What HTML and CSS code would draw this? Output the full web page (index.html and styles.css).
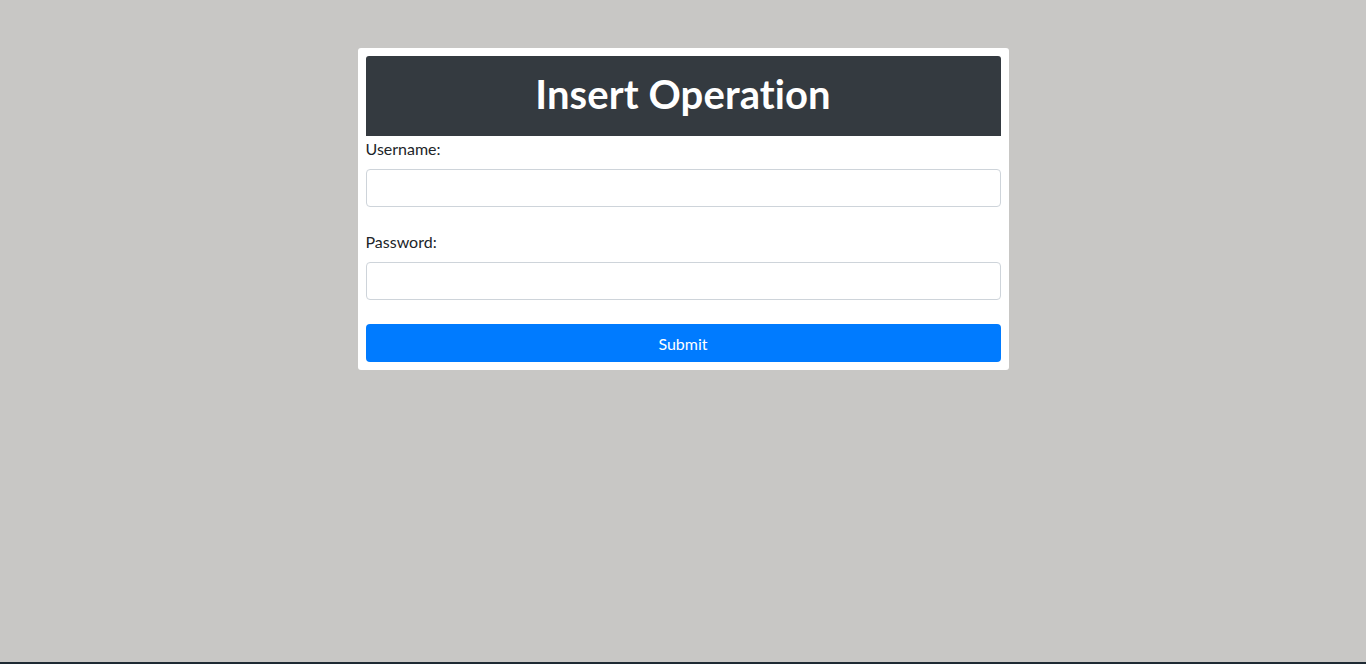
FILE: index.html
```html
<!DOCTYPE html>
<html lang="en">
<head>
<meta charset="utf-8">
<title>Insert Operation</title>
<link rel="stylesheet" href="styles.css">
</head>
<body>
<main class="page">
  <form class="card">
    <h1 class="card-title">Insert Operation</h1>
    <div class="field field-first">
      <label class="field-label" for="username">Username:</label>
      <input class="field-input" id="username" type="text">
    </div>
    <div class="field">
      <label class="field-label" for="password">Password:</label>
      <input class="field-input" id="password" type="password">
    </div>
    <button class="submit-btn" type="submit">Submit</button>
  </form>
</main>
<div class="bottom-edge"></div>
</body>
</html>
```

FILE: styles.css
```css
html, body {
  height: 100%;
}
body {
  margin: 0;
  background: #c8c7c5;
  font-family: Lato, "Open Sans", sans-serif;
  color: #212529;
  display: flex;
  flex-direction: column;
}
.page {
  flex: 1;
  padding-top: 48px;
}
.card {
  width: 651px;
  box-sizing: border-box;
  margin: 0 auto;
  background: #fff;
  border-radius: 3px;
  padding: 8px;
  display: flex;
  flex-direction: column;
}
.card-title {
  margin: 0;
  height: 80px;
  box-sizing: border-box;
  padding-bottom: 4px;
  background: #343a40;
  border-radius: 3px 3px 0 0;
  color: #fff;
  font-size: 40px;
  font-weight: 700;
  letter-spacing: 0.1px;
  display: flex;
  align-items: center;
  justify-content: center;
  line-height: 1.2;
}
.field {
  display: flex;
  flex-direction: column;
  margin-bottom: 23px;
}
.field-label {
  font-size: 16px;
  line-height: 24px;
  margin-bottom: 8px;
}
.field-first .field-label {
  margin-top: 1px;
}
.field-input {
  height: 38px;
  box-sizing: border-box;
  border: 1px solid #ced4da;
  border-radius: 4px;
  padding: 6px 12px;
  font: inherit;
  margin: 0;
}
.submit-btn {
  height: 38px;
  margin-top: 1px;
  border: 0;
  border-radius: 4px;
  background: #007bff;
  color: #fff;
  font: inherit;
  font-size: 16px;
  cursor: pointer;
}
.bottom-edge {
  height: 2px;
  background: #1e2a33;
}
```
